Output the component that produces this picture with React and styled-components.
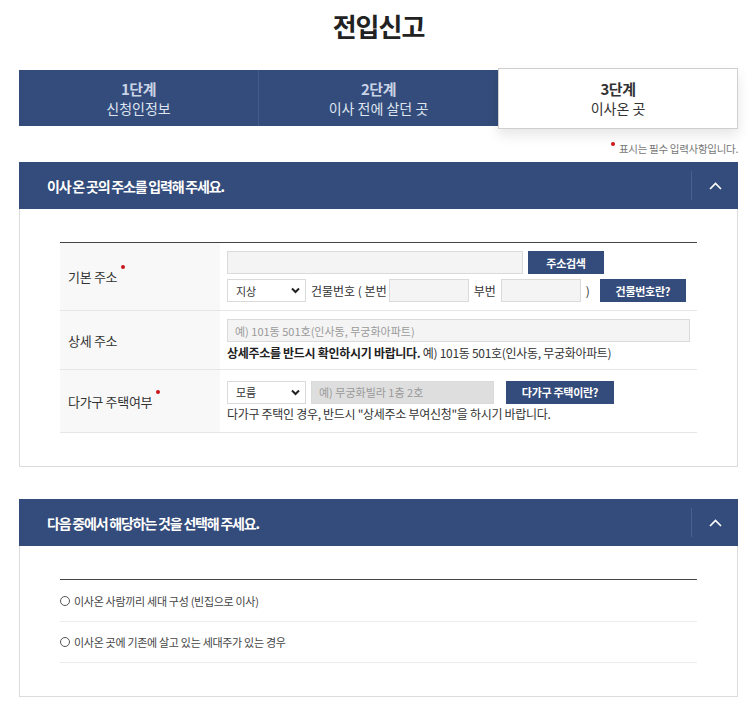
import React from "react";
import styled, { createGlobalStyle } from "styled-components";

const Global = createGlobalStyle`
  html, body { margin: 0; padding: 0; background: #fff; }
  body { font-family: "Noto Sans CJK KR", "Noto Sans", sans-serif; color: #333; }
  * { box-sizing: border-box; }
`;

const BLUE = "#344c7b";

const Page = styled.div`
  width: 719px;
  margin-left: 19px;
  padding-bottom: 10px;
`;

const Title = styled.h1`
  margin: 0;
  height: 54px;
  padding-top: 8px;
  text-align: center;
  font-size: 26px;
  line-height: 36px;
  font-weight: 700;
  color: #222;
  letter-spacing: -1px;
`;

const Steps = styled.div`
  display: grid;
  grid-template-columns: 239px 240px 240px;
  height: 56px;
  margin-top: 16px;
  background: ${BLUE};
  align-items: stretch;
`;

const Step = styled.div`
  display: flex;
  flex-direction: column;
  align-items: center;
  justify-content: center;
  position: relative;
  border-left: ${(p) => (p.$first ? "none" : "1px solid #44598a")};
  background: ${(p) => (p.$active ? "#fff" : "transparent")};
  ${(p) =>
    p.$active &&
    `
    margin: -2px 0 -3px 0;
    border: 1px solid #cfcfcf;
    box-shadow: 0 6px 12px rgba(0,0,0,0.10);
    z-index: 1;
  `}
`;

const StepNum = styled.div`
  font-size: 15px;
  font-weight: 700;
  line-height: 20px;
  letter-spacing: -0.5px;
  color: ${(p) => (p.$active ? "#333" : "#c9d3e6")};
`;

const StepName = styled.div`
  font-size: 14px;
  line-height: 19px;
  color: ${(p) => (p.$active ? "#333" : "#dfe5f0")};
`;

const Note = styled.div`
  height: 36px;
  display: flex;
  justify-content: flex-end;
  align-items: center;
  padding-top: 8px;
  font-size: 10.5px;
  color: #777;
  letter-spacing: -0.3px;
`;

const RedDot = styled.span`
  display: inline-block;
  width: 4px;
  height: 4px;
  border-radius: 50%;
  background: #d0161b;
  margin-right: 4px;
  position: relative;
  top: -4px;
`;

const Section = styled.section`
  margin-bottom: ${(p) => p.$mb || 0}px;
`;

const SectionHead = styled.div`
  height: 47px;
  background: ${BLUE};
  display: flex;
  align-items: center;
  justify-content: space-between;
  padding-left: 28px;
`;

const SectionTitle = styled.h2`
  margin: 0;
  font-size: 14px;
  font-weight: 700;
  color: #fff;
  letter-spacing: -1.2px;
`;

const Toggle = styled.button`
  width: 47px;
  height: 29px;
  border: none;
  border-left: 1px solid #4a5f8c;
  background: transparent;
  display: flex;
  align-items: center;
  justify-content: center;
  padding: 0;
  cursor: pointer;
`;

const SectionBody = styled.div`
  border: 1px solid #dcdcdc;
  border-top: none;
  padding: 33px 40px 33px 40px;
`;

const Table = styled.div`
  border-top: 1px solid #444;
`;

const Row = styled.div`
  display: grid;
  grid-template-columns: 160px 1fr;
  border-bottom: 1px solid #e6e6e6;
  min-height: ${(p) => p.$h}px;
`;

const Label = styled.div`
  background: #f8f8f8;
  display: flex;
  align-items: center;
  padding-left: 8px;
  font-size: 13px;
  color: #333;
  letter-spacing: -0.3px;
`;

const LabelText = styled.span`
  position: relative;
`;

const Req = styled.span`
  position: absolute;
  right: -8px;
  top: -2px;
  width: 4px;
  height: 4px;
  border-radius: 50%;
  background: #c8161d;
`;

const Cell = styled.div`
  display: flex;
  flex-direction: column;
  justify-content: center;
  gap: ${(p) => p.$gap || 5}px;
  padding: 8px 7px;
`;

const Line = styled.div`
  display: flex;
  align-items: center;
  gap: 5px;
  font-size: 12px;
  color: #333;
`;

const Input = styled.input`
  width: ${(p) => p.$w}px;
  height: 23px;
  border: 1px solid #dadada;
  background: ${(p) => (p.$disabled ? "#dedede" : "#f4f4f4")};
  padding: 0 7px;
  font-family: inherit;
  font-size: 11px;
  color: #333;
  outline: none;
  &::placeholder { color: #9a9a9a; }
`;

const SelectWrap = styled.div`
  position: relative;
  width: 79px;
  height: 23px;
`;

const Select = styled.select`
  appearance: none;
  width: 100%;
  height: 100%;
  border: 1px solid #dadada;
  background: #fff;
  padding: 0 0 0 8px;
  font-family: inherit;
  font-size: 11px;
  color: #333;
  outline: none;
`;

const Arrow = styled.svg`
  position: absolute;
  right: 6px;
  top: 8px;
  pointer-events: none;
`;

const Btn = styled.button`
  height: 23px;
  width: ${(p) => p.$w}px;
  margin-left: ${(p) => p.$ml || 0}px;
  border: none;
  background: ${BLUE};
  color: #fff;
  font-family: inherit;
  font-size: 11px;
  font-weight: 700;
  padding: 0;
  letter-spacing: -0.3px;
`;

const Help = styled.p`
  margin: 0;
  font-size: 12px;
  line-height: 16px;
  color: #333;
  letter-spacing: -0.3px;
  strong { font-weight: 700; color: #222; }
`;

const Text = styled.span`
  margin: ${(p) => p.$m || "0"};
  white-space: nowrap;
`;

const RadioRow = styled.label`
  display: flex;
  align-items: center;
  gap: 3px;
  height: ${(p) => p.$h}px;
  border-bottom: 1px solid #ececec;
  font-size: 11px;
  color: #444;
  letter-spacing: -0.3px;
`;

const RadioCircle = styled.span`
  width: 10px;
  height: 10px;
  border: 1px solid #555;
  border-radius: 50%;
  display: inline-block;
  margin-right: 1px;
`;

function Chevron() {
  return (
    <svg width="13" height="8" viewBox="0 0 13 8">
      <polyline points="1,7 6.5,1.5 12,7" fill="none" stroke="#fff" strokeWidth="1.6" />
    </svg>
  );
}

function Dropdown({ value }) {
  return (
    <SelectWrap>
      <Select defaultValue={value}>
        <option>{value}</option>
      </Select>
      <Arrow width="9" height="7" viewBox="0 0 9 7">
        <polyline points="1,1.5 4.5,5 8,1.5" fill="none" stroke="#222" strokeWidth="2" />
      </Arrow>
    </SelectWrap>
  );
}

export default function App() {
  return (
    <>
      <Global />
      <Page>
        <Title>전입신고</Title>
        <Steps>
          <Step $first>
            <StepNum>1단계</StepNum>
            <StepName>신청인정보</StepName>
          </Step>
          <Step>
            <StepNum>2단계</StepNum>
            <StepName>이사 전에 살던 곳</StepName>
          </Step>
          <Step $active>
            <StepNum $active>3단계</StepNum>
            <StepName $active>이사온 곳</StepName>
          </Step>
        </Steps>
        <Note>
          <RedDot />
          표시는 필수 입력사항입니다.
        </Note>

        <Section $mb={32}>
          <SectionHead>
            <SectionTitle>이사 온 곳의 주소를 입력해 주세요.</SectionTitle>
            <Toggle aria-label="접기"><Chevron /></Toggle>
          </SectionHead>
          <SectionBody>
            <Table>
              <Row $h={68}>
                <Label><LabelText>기본 주소<Req /></LabelText></Label>
                <Cell>
                  <Line>
                    <Input $w={296} />
                    <Btn $w={76}>주소검색</Btn>
                  </Line>
                  <Line>
                    <Dropdown value="지상" />
                    <Text $m="0 -3px 0 0">건물번호 ( 본번</Text>
                    <Input $w={80} />
                    <Text>부번</Text>
                    <Input $w={80} />
                    <Text $m="0 5px 0 0">)</Text>
                    <Btn $w={86}>건물번호란?</Btn>
                  </Line>
                </Cell>
              </Row>
              <Row $h={59}>
                <Label><LabelText>상세 주소</LabelText></Label>
                <Cell $gap={3}>
                  <Line>
                    <Input $w={463} placeholder="예) 101동 501호(인사동, 무궁화아파트)" />
                  </Line>
                  <Help>
                    <strong>상세주소를 반드시 확인하시기 바랍니다.</strong> 예) 101동 501호(인사동, 무궁화아파트)
                  </Help>
                </Cell>
              </Row>
              <Row $h={63}>
                <Label><LabelText>다가구 주택여부<Req /></LabelText></Label>
                <Cell $gap={2}>
                  <Line>
                    <Dropdown value="모름" />
                    <Input $w={183} $disabled disabled placeholder="예) 무궁화빌라 1층 2호" />
                    <Btn $w={108} $ml={7}>다가구 주택이란?</Btn>
                  </Line>
                  <Help>다가구 주택인 경우, 반드시 "상세주소 부여신청"을 하시기 바랍니다.</Help>
                </Cell>
              </Row>
            </Table>
          </SectionBody>
        </Section>

        <Section>
          <SectionHead>
            <SectionTitle>다음 중에서 해당하는 것을 선택해 주세요.</SectionTitle>
            <Toggle aria-label="접기"><Chevron /></Toggle>
          </SectionHead>
          <SectionBody>
            <Table>
              <RadioRow $h={42}>
                <RadioCircle />
                이사온 사람끼리 세대 구성 (빈집으로 이사)
              </RadioRow>
              <RadioRow $h={41}>
                <RadioCircle />
                이사온 곳에 기존에 살고 있는 세대주가 있는 경우
              </RadioRow>
            </Table>
          </SectionBody>
        </Section>
      </Page>
    </>
  );
}
